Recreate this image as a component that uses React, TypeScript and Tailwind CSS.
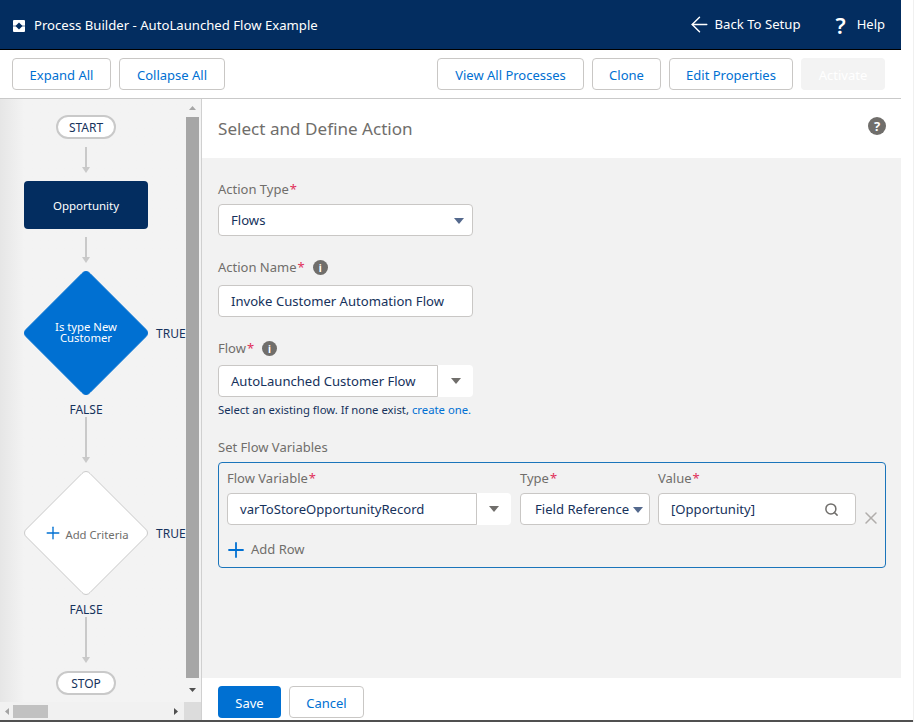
import React from "react";
import { ArrowLeft, Plus, Search, X } from "lucide-react";

function Req() {
  return <span className="text-[#e0305a] ml-px">*</span>;
}

function Caret({ color = "#706e6b" }: { color?: string }) {
  return (
    <svg width="10" height="6" viewBox="0 0 10 6" className="shrink-0">
      <path d="M0 0h10L5 6z" fill={color} />
    </svg>
  );
}

function Info() {
  return (
    <span className="w-[15px] h-[15px] rounded-full bg-[#706e6b] text-white flex items-center justify-center text-[10px] font-bold leading-none">
      i
    </span>
  );
}

function Arrow({ h }: { h: number }) {
  return (
    <svg width="10" height={h} viewBox={`0 0 10 ${h}`} className="block">
      <path d={`M5 0V${h - 4}`} stroke="#c9c9c9" strokeWidth="2" />
      <path d={`M1 ${h - 6}h8l-4 6z`} fill="#c9c9c9" />
    </svg>
  );
}

function Pill({ label }: { label: string }) {
  return (
    <div className="w-[60px] h-6 rounded-full border-2 border-[#c9c9c9] bg-white flex items-center justify-center pt-[2px] text-[12px] text-[#16325c]">
      {label}
    </div>
  );
}

function Diamond({ fill, stroke, children }: { fill: string; stroke: string; children: React.ReactNode }) {
  return (
    <div className="relative w-[124px] h-[124px]">
      <svg width="124" height="124" viewBox="0 0 124 124" className="block">
        <path
          d="M58 2.5a5 5 0 0 1 8 0L121.500 58a5 5 0 0 1 0 8L66 121.500a5 5 0 0 1-8 0L2.500 66a5 5 0 0 1 0-8z"
          fill={fill}
          stroke={stroke}
        />
      </svg>
      <div className="absolute inset-0 flex items-center justify-center text-center text-[11.300px] leading-[11px]">
        {children}
      </div>
      <span className="absolute left-[132px] top-[56px] text-[12px] leading-[14px] text-[#16325c]">TRUE</span>
    </div>
  );
}

function FalseLabel() {
  return <div className="h-[14px] mt-[8px] text-[12px] leading-[14px] text-[#16325c]">FALSE</div>;
}

function Btn({ label, w }: { label: string; w: string }) {
  return (
    <button className={`${w} h-8 rounded border border-[#c9c7c5] bg-white text-[#0070d2] text-[13px] pt-[3px]`}>{label}</button>
  );
}

function Field({ children, className }: { children: React.ReactNode; className: string }) {
  return (
    <div className={`${className} h-8 rounded border border-[#c9c7c5] bg-white flex items-center text-[13.100px] text-[#16325c]`}>
      {children}
    </div>
  );
}

function Combo({ value, className, dividerRight }: { value: string; className: string; dividerRight: string }) {
  return (
    <div className={`${className} h-8 flex text-[13.100px] text-[#16325c]`}>
      <div className="flex-1 rounded-l border border-[#c9c7c5] bg-white flex items-center pl-3 pt-px">{value}</div>
      <div className={`${dividerRight} rounded-r bg-white flex items-center justify-center`}>
        <Caret />
      </div>
    </div>
  );
}

export default function App() {
  return (
    <div className="w-[914px] h-[722px] bg-white overflow-hidden font-['Noto_Sans',sans-serif] border-r border-[#f0f0f0]">
      <div className="w-[901px] h-[720px] flex flex-col">
        <header className="h-[50px] bg-[#032d60] border-b border-black text-white text-[13px] flex items-center justify-between pl-[13px] pr-4 shrink-0">
          <div className="flex items-center gap-[9px] mt-[3px]">
            <svg width="12" height="12" viewBox="0 0 12 12">
              <rect width="12" height="12" rx="1" fill="#fff" />
              <path d="M0 6h12" stroke="#032d60" strokeWidth="1" opacity="0.6" />
              <path d="M6 2.500 9.500 6 6 9.500 2.500 6z" fill="#032d60" />
            </svg>
            <span className="text-[13.150px]">Process Builder - AutoLaunched Flow Example</span>
          </div>
          <div className="flex items-center">
            <ArrowLeft size={25} strokeWidth={1.400} className="mr-[3px]" />
            <span className="text-[13.150px]">Back To Setup</span>
            <span className="ml-[35px] mr-[11px] text-[22px] font-semibold leading-none">?</span>
            <span>Help</span>
          </div>
        </header>

        <div className="h-[49px] border-b border-[#c9c9c9] bg-white flex items-center justify-between pl-3 pr-4 shrink-0">
          <div className="flex gap-2">
            <Btn label="Expand All" w="w-[99px]" />
            <Btn label="Collapse All" w="w-[106px]" />
          </div>
          <div className="flex gap-2">
            <Btn label="View All Processes" w="w-[147px]" />
            <Btn label="Clone" w="w-[69px]" />
            <Btn label="Edit Properties" w="w-[124px]" />
            <button className="w-[84px] h-8 rounded bg-[#f3f3f3] text-white text-[13px] pt-[3px]">Activate</button>
          </div>
        </div>

        <div className="flex-1 flex min-h-0">
          <aside className="w-[202px] border-r border-[#d0d0d0] bg-gradient-to-r from-[#e6e6e6] via-[#f3f3f3] via-[12%] to-[#f3f3f3] flex flex-col shrink-0">
            <div className="flex-1 flex min-h-0">
              <div className="w-[172px] pt-4 flex flex-col items-center">
                <Pill label="START" />
                <div className="mt-2"><Arrow h={26} /></div>
                <div className="mt-2 w-[124px] h-12 rounded bg-[#032d60] text-white text-[11.500px] pt-px flex items-center justify-center">
                  Opportunity
                </div>
                <div className="mt-2"><Arrow h={26} /></div>
                <div className="mt-2">
                  <Diamond fill="#0070d2" stroke="#0070d2">
                    <span className="text-white w-[70px] -mt-[2px]">Is type New Customer</span>
                  </Diamond>
                </div>
                <FalseLabel />
                <Arrow h={46} />
                <div className="mt-2">
                  <Diamond fill="#fff" stroke="#c9c9c9">
                    <span className="flex items-center text-[#706e6b] pt-[2px] ml-[4px]">
                      <Plus size={20} strokeWidth={1.600} className="text-[#0070d2] mr-[2px] -ml-[4px] -mt-[2px]" />
                      Add Criteria
                    </span>
                  </Diamond>
                </div>
                <FalseLabel />
                <Arrow h={46} />
                <div className="mt-2"><Pill label="STOP" /></div>
              </div>
              <div className="w-[29px] flex flex-col pl-[14px]">
                <div className="h-[18px] flex items-center justify-center w-[13px]">
                  <svg width="7" height="4" viewBox="0 0 7 4"><path d="M0 4 3.500 0 7 4z" fill="#a6a6a6" /></svg>
                </div>
                <div className="w-[13px] h-[561px] bg-[#a6a6a6]" />
                <div className="h-[24px] flex items-center justify-center w-[13px]">
                  <svg width="7" height="4" viewBox="0 0 7 4"><path d="M0 0h7L3.500 4z" fill="#505050" /></svg>
                </div>
              </div>
            </div>
            <div className="h-[18px] flex items-center bg-[#f1f1f1] shrink-0">
              <div className="w-[13px] flex justify-center">
                <svg width="4" height="7" viewBox="0 0 4 7"><path d="M4 0v7L0 3.500z" fill="#a3a3a3" /></svg>
              </div>
              <div className="w-[35px] h-[13px] bg-[#c1c1c1]" />
              <div className="w-[136px] flex justify-end pr-[6px]">
                <svg width="4" height="7" viewBox="0 0 4 7"><path d="M0 0v7l4-3.500z" fill="#505050" /></svg>
              </div>
              <div className="flex-1 h-full bg-[#dcdcdc]" />
            </div>
          </aside>

          <main className="flex-1 flex flex-col min-w-0">
            <div className="h-[59px] bg-white flex items-center justify-between pl-4 pr-[15px] shrink-0">
              <h1 className="text-[17.100px] text-[#706e6b]">Select and Define Action</h1>
              <span className="w-[18px] h-[18px] rounded-full bg-[#706e6b] text-white flex items-center justify-center text-[13px] font-bold leading-none mb-[5px]">
                ?
              </span>
            </div>

            <div className="flex-1 bg-[#f2f2f2] px-4 pt-[22px] min-h-0">
              <div className="h-[18px] text-[13px] leading-[18px] text-[#706e6b]">Action Type<Req /></div>
              <Field className="w-[255px] mt-[6px] justify-between pl-3 pr-2 pt-px">
                Flows
                <Caret color="#54698d" />
              </Field>

              <div className="h-[18px] mt-[22px] flex items-center gap-2 pt-px text-[13px] text-[#706e6b]">
                <span>Action Name<Req /></span>
                <Info />
              </div>
              <Field className="w-[255px] mt-[9px] pl-3 pt-px">Invoke Customer Automation Flow</Field>

              <div className="h-[18px] mt-[22px] flex items-center gap-2 pt-px text-[13px] text-[#706e6b]">
                <span>Flow<Req /></span>
                <Info />
              </div>
              <Combo value="AutoLaunched Customer Flow" className="w-[255px] mt-[8px]" dividerRight="w-[35px]" />
              <p className="mt-[5px] h-4 text-[11.300px] leading-4 text-[#16325c]">
                Select an existing flow. If none exist, <span className="text-[#0070d2]">create one.</span>
              </p>

              <div className="mt-[20px] h-[18px] text-[13px] leading-[18px] text-[#706e6b]">Set Flow Variables</div>
              <div className="w-[668px] h-[106px] mt-[6px] rounded border border-[#1b75bb] pt-[6px] pl-2 relative">
                <div className="flex">
                  <div className="w-[284px]">
                    <div className="h-[18px] text-[13px] leading-[18px] text-[#706e6b]">Flow Variable<Req /></div>
                    <Combo value="varToStoreOpportunityRecord" className="w-[284px] mt-[6px]" dividerRight="w-[34px]" />
                  </div>
                  <div className="w-[130px] ml-[9px]">
                    <div className="h-[18px] text-[13px] leading-[18px] text-[#706e6b]">Type<Req /></div>
                    <Field className="w-[130px] mt-[6px] justify-between pl-[14px] pr-[6px] pt-px">
                      Field Reference
                      <Caret color="#54698d" />
                    </Field>
                  </div>
                  <div className="w-[198px] ml-2">
                    <div className="h-[18px] text-[13px] leading-[18px] text-[#706e6b]">Value<Req /></div>
                    <Field className="w-[198px] mt-[6px] justify-between pl-3 pr-[16px] pt-px">
                      [Opportunity]
                      <Search size={15} strokeWidth={2.400} className="text-[#706e6b]" />
                    </Field>
                  </div>
                  <X size={20} strokeWidth={1.800} className="text-[#b0adab] ml-[5px] mt-[39px]" />
                </div>
                <div className="mt-[10px] flex items-center text-[13px] text-[#706e6b]">
                  <Plus size={24} strokeWidth={1.800} className="text-[#0070d2] -ml-[3px] mr-[3px]" />
                  Add Row
                </div>
              </div>
            </div>

            <div className="h-[42px] bg-white flex items-start gap-2 pl-4 pt-2 shrink-0">
              <button className="w-[63px] h-8 rounded bg-[#0070d2] text-white text-[13px] pt-[3px]">Save</button>
              <Btn label="Cancel" w="w-[75px]" />
            </div>
          </main>
        </div>
      </div>
      <div className="h-[2px] bg-[#505050]" />
    </div>
  );
}
